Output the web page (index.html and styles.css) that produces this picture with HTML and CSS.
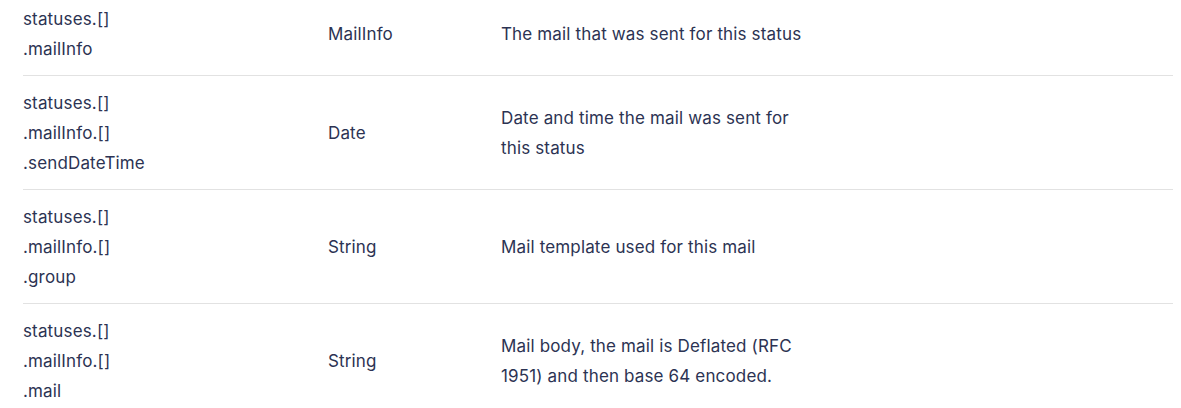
FILE: index.html
```html
<!DOCTYPE html>
<html lang="en">
<head>
<meta charset="utf-8">
<title>Fields</title>
<link rel="stylesheet" href="styles.css">
</head>
<body>
<div class="page">
  <table class="fields">
    <colgroup>
      <col class="c-name">
      <col class="c-type">
      <col class="c-desc">
      <col class="c-rest">
    </colgroup>
    <tbody>
      <tr>
        <td>statuses.[]<br>.mailInfo</td>
        <td>MailInfo</td>
        <td>The mail that was sent for this status</td>
        <td></td>
      </tr>
      <tr>
        <td>statuses.[]<br>.mailInfo.[]<br>.sendDateTime</td>
        <td>Date</td>
        <td>Date and time the mail was sent for this status</td>
        <td></td>
      </tr>
      <tr>
        <td>statuses.[]<br>.mailInfo.[]<br>.group</td>
        <td>String</td>
        <td>Mail template used for this mail</td>
        <td></td>
      </tr>
      <tr>
        <td>statuses.[]<br>.mailInfo.[]<br>.mail</td>
        <td>String</td>
        <td>Mail body, the mail is Deflated (RFC 1951) and then base 64 encoded.</td>
        <td></td>
      </tr>
    </tbody>
  </table>
</div>
</body>
</html>
```

FILE: styles.css
```css
html, body {
  margin: 0;
  padding: 0;
  background: #ffffff;
}

.page {
  padding: 0 8px 0 23px;
  overflow: hidden;
  height: 408px;
}

.fields {
  margin-top: -8px;
  width: 1150px;
  border-collapse: collapse;
  table-layout: fixed;
  font-family: Inter, "Noto Sans", sans-serif;
  font-size: 17px;
  letter-spacing: 0.15px;
  line-height: 30px;
  color: #2c3353;
}

.c-name { width: 305px; }
.c-type { width: 173px; }
.c-desc { width: 310px; }
.c-rest { width: auto; }

.fields tr {
  border-bottom: 1px solid #e2e2e2;
}

.fields td {
  padding: 11.5px 0;
  vertical-align: middle;
  text-align: left;
}
```
